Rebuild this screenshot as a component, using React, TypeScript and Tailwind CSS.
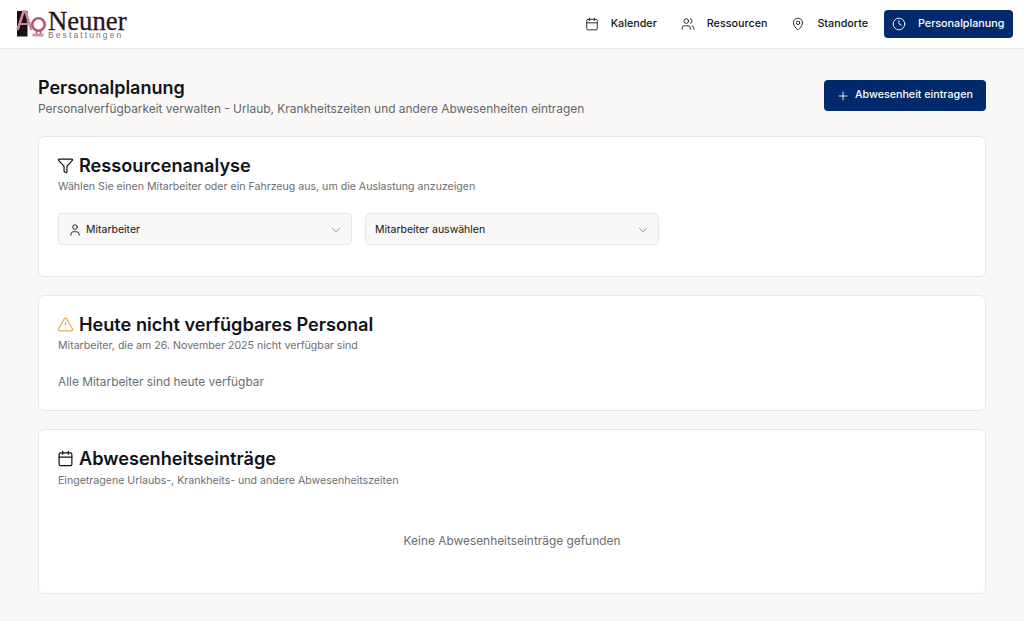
import { Calendar, ChevronDown, Clock, Filter, MapPin, Plus, TriangleAlert, User, Users } from "lucide-react";

const Logo = () => {
  return (
    <div className="flex items-start h-[28px] w-[112px]">
      <svg width="31" height="28" viewBox="0 0 31 28" className="shrink-0">
        <rect x="1" y="1" width="10.5" height="25.5" fill="#1b1014" />
        <path d="M1.5 20 L7.5 1.5 L9.5 1.5 L15.5 20" fill="none" stroke="#cf8899" strokeWidth="2.6" />
        <path d="M3 14 L14 14" stroke="#cf8899" strokeWidth="2" />
        <circle cx="22.5" cy="14.5" r="6.2" fill="none" stroke="#b4576c" strokeWidth="2.6" />
        <path d="M20.5 20 L20.5 24 M24.5 20 L24.5 24" stroke="#b4576c" strokeWidth="1.6" />
        <rect x="16.5" y="23.5" width="11" height="3" fill="#d592a2" />
      </svg>
      <div className="flex flex-col ml-[1px] -mt-[1px]">
        <span className="font-['Liberation_Serif',serif] text-[26.7px] leading-[24px] text-[#2a141c] [-webkit-text-stroke:0.3px_#2a141c]">
          Neuner
        </span>
        <span className="font-['Liberation_Sans',sans-serif] text-[8.5px] leading-[9px] text-[#7a7478] tracking-[2.1px] mt-[-2px]">
          Bestattungen
        </span>
      </div>
    </div>
  );
};

const App = () => {
  return (
    <div className="flex flex-col w-full h-[621px] overflow-hidden bg-[#f9f8f6] font-['Inter',sans-serif] text-[#111318]">
      <header className="flex flex-row items-center justify-between h-[49px] bg-white border-b border-[#e8e7e5] pl-[16px] pr-[11px] shrink-0">
        <Logo />
        <nav className="flex flex-row items-center">
          <a className="flex items-center gap-[12px] h-[28px] px-[12px] text-[10.75px] font-medium">
            <Calendar size={14} strokeWidth={1.5} />
            Kalender
          </a>
          <a className="flex items-center gap-[12px] h-[28px] px-[12px] text-[10.75px] font-medium">
            <Users size={14} strokeWidth={1.5} />
            Ressourcen
          </a>
          <a className="flex items-center gap-[12px] h-[28px] px-[12px] text-[10.75px] font-medium">
            <MapPin size={14} strokeWidth={1.5} />
            Standorte
          </a>
          <a className="flex items-center gap-[12px] h-[28px] w-[129px] ml-[4px] pl-[8px] rounded-[4px] bg-[#002a6b] text-white text-[10.75px] font-medium">
            <Clock size={14} strokeWidth={1.5} />
            Personalplanung
          </a>
        </nav>
      </header>

      <main className="flex flex-col px-[38px] pt-[31px]">
        <div className="flex flex-row items-start justify-between h-[57px]">
          <div>
            <h1 className="text-[18px] leading-[16px] font-semibold">Personalplanung</h1>
            <p className="text-[11.9px] leading-[16px] mt-[5px] text-[#64666b]">
              Personalverfügbarkeit verwalten - Urlaub, Krankheitszeiten und andere Abwesenheiten eintragen
            </p>
          </div>
          <button className="flex items-center gap-[5px] h-[31px] w-[162px] pl-[12px] rounded-[4px] bg-[#002a6b] text-white text-[10.7px] font-medium">
            <Plus size={14} strokeWidth={1.5} />
            Abwesenheit eintragen
          </button>
        </div>

        <section className="h-[141px] bg-white border border-[#e8e7e5] rounded-[6px] px-[19px] pt-[18px] mb-[18px] -mt-[1px]">
          <h2 className="flex items-center gap-[5px] text-[18.15px] leading-[20px] font-semibold">
            <Filter size={17} strokeWidth={1.7} className="-ml-[1px]" />
            Ressourcenanalyse
          </h2>
          <p className="text-[10.6px] leading-[14px] mt-[5px] text-[#6b6d72]">
            Wählen Sie einen Mitarbeiter oder ein Fahrzeug aus, um die Auslastung anzuzeigen
          </p>
          <div className="flex flex-row gap-[13px] mt-[19px]">
            <div className="flex items-center justify-between w-[294px] h-[32px] pt-[1px] bg-[#f9f8f6] border border-[#e8e7e5] rounded-[4px] pl-[9px] pr-[8px] text-[10.5px]">
              <span className="flex items-center gap-[4px]">
                <User size={14} strokeWidth={1.5} />
                Mitarbeiter
              </span>
              <ChevronDown size={14} strokeWidth={1.5} className="text-[#77797d]" />
            </div>
            <div className="flex items-center justify-between w-[294px] h-[32px] pt-[1px] bg-[#f9f8f6] border border-[#e8e7e5] rounded-[4px] pl-[9px] pr-[8px] text-[10.5px]">
              Mitarbeiter auswählen
              <ChevronDown size={14} strokeWidth={1.5} className="text-[#77797d]" />
            </div>
          </div>
        </section>

        <section className="h-[116px] bg-white border border-[#e8e7e5] rounded-[6px] px-[19px] pt-[18px] mb-[18px]">
          <h2 className="flex items-center gap-[5px] text-[18.15px] leading-[20px] font-semibold">
            <TriangleAlert size={17} strokeWidth={1.7} className="-ml-[1px] text-[#e6a95c]" />
            Heute nicht verfügbares Personal
          </h2>
          <p className="text-[10.6px] leading-[14px] mt-[5px] text-[#6b6d72]">
            Mitarbeiter, die am 26. November 2025 nicht verfügbar sind
          </p>
          <p className="text-[11.9px] leading-[16px] mt-[21px] text-[#6b6d72]">Alle Mitarbeiter sind heute verfügbar</p>
        </section>

        <section className="h-[165px] bg-white border border-[#e8e7e5] rounded-[6px] px-[19px] pt-[18px]">
          <h2 className="flex items-center gap-[5px] text-[18.15px] leading-[20px] font-semibold">
            <Calendar size={17} strokeWidth={1.7} className="-ml-[1px]" />
            Abwesenheitseinträge
          </h2>
          <p className="text-[10.6px] leading-[14px] mt-[6px] text-[#6b6d72]">
            Eingetragene Urlaubs-, Krankheits- und andere Abwesenheitszeiten
          </p>
          <p className="text-[11.9px] leading-[16px] mt-[45px] text-center text-[#6b6d72]">
            Keine Abwesenheitseinträge gefunden
          </p>
        </section>
      </main>
    </div>
  );
};

export default App;
